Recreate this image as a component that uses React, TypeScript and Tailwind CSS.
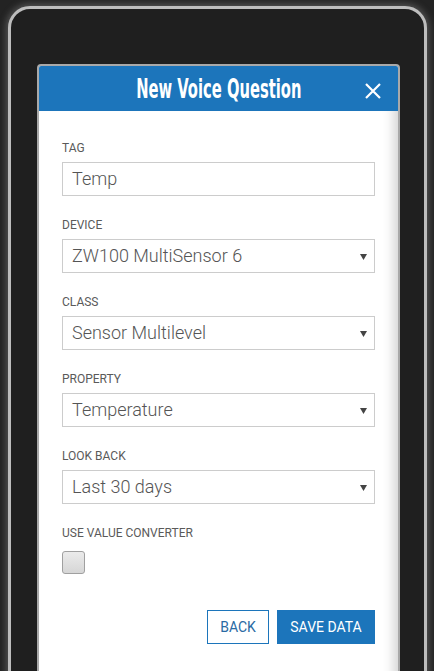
import React from 'react';

const fields = [
  { label: 'Tag', value: 'Temp', select: false },
  { label: 'Device', value: 'ZW100 MultiSensor 6', select: true },
  { label: 'Class', value: 'Sensor Multilevel', select: true },
  { label: 'Property', value: 'Temperature', select: true },
  { label: 'Look Back', value: 'Last 30 days', select: true },
];

const Field = ({ label, value, select }: { label: string; value: string; select: boolean }) => (
  <div className="mb-[22px]">
    <div className="text-[12px] leading-[14px] uppercase text-[#5a5a5a] mb-[7px]">{label}</div>
    <div className="relative h-[34px] border border-[#cccccc] bg-white flex items-center pl-[9px]">
      <span className="text-[18px] font-light text-[#555555] leading-none">{value}</span>
      {select && (
        <svg className="absolute right-[7px] top-[14px]" width="7" height="6" viewBox="0 0 7 6">
          <path d="M0 0h7L3.5 6z" fill="#444444" />
        </svg>
      )}
    </div>
  </div>
);

export default function App() {
  return (
    <div className="h-[671px] overflow-hidden bg-[#232323] pl-[8px] pr-[7px] pt-[6px] font-['Roboto',sans-serif]">
      <div className="h-[700px] rounded-[22px] border-[3px] border-[#bdbdbd] bg-[#1f1f1f] shadow-[0_0_7px_2px_rgba(180,180,180,0.35)] pl-[26px] pr-[24px] pt-[55px]">
        <div className="h-[650px] rounded-t-[4px] border-2 border-[#a9a9a9] bg-white overflow-hidden">
          <div className="relative h-[45px] bg-[#1c75bb] flex items-center justify-center">
            <span className="font-['Liberation_Sans_Narrow','DejaVu_Sans_Condensed',sans-serif] font-bold text-[21px] text-white scale-x-[0.78] scale-y-125 mt-[2px]">
              New Voice Question
            </span>
            <svg className="absolute right-[17px] top-[17px]" width="16" height="16" viewBox="0 0 16 16">
              <path d="M1 1L15 15M15 1L1 15" stroke="white" strokeWidth="2.2" />
            </svg>
          </div>
          <div className="h-full px-[23px] pt-[30px] shadow-[inset_-14px_0_12px_-10px_rgba(0,0,0,0.18)]">
            {fields.map((f) => (
              <Field key={f.label} {...f} />
            ))}
            <div className="text-[12px] leading-[14px] uppercase text-[#5a5a5a]">Use Value Converter</div>
            <div className="mt-[11px] w-[23px] h-[23px] rounded-[3px] border border-[#a0a0a0] bg-gradient-to-b from-[#ebebeb] to-[#d6d6d6]" />
            <div className="mt-[36px] flex justify-end gap-[8px]">
              <button className="h-[34px] w-[62px] border border-[#1c75bb] text-[#2a6aa3] text-[14px] bg-white">BACK</button>
              <button className="h-[34px] w-[98px] bg-[#1c75bb] text-white text-[14px]">SAVE DATA</button>
            </div>
          </div>
        </div>
      </div>
    </div>
  );
}
